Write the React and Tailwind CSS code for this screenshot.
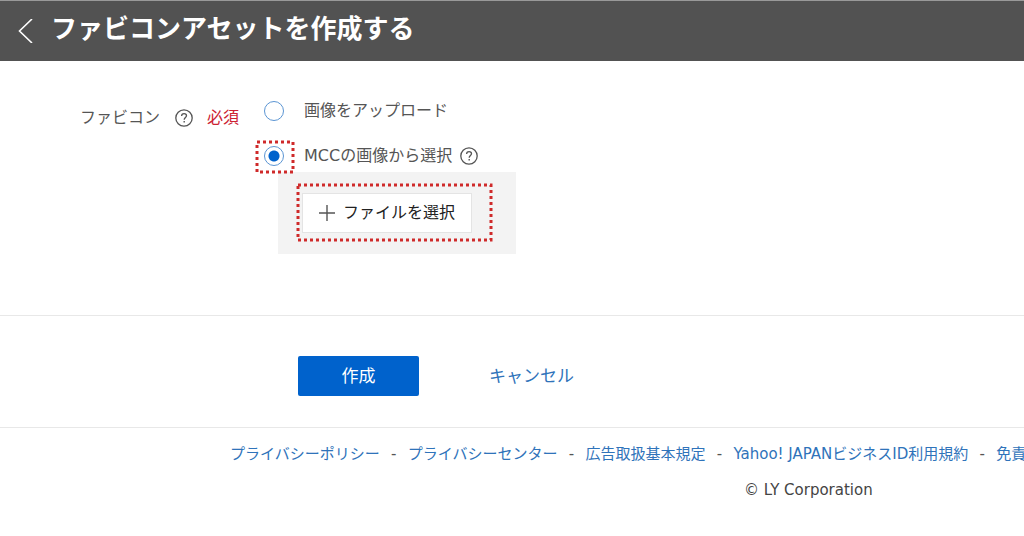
import { useState } from 'react';

const footerLinks = [
  'プライバシーポリシー',
  'プライバシーセンター',
  '広告取扱基本規定',
  'Yahoo! JAPANビジネスID利用規約',
  '免責事項',
];

function HelpIcon() {
  return (
    <svg className="h-[18px] w-[18px] shrink-0 text-[#555]" viewBox="0 0 18 18" fill="none" stroke="currentColor" strokeWidth="1.3" aria-hidden="true">
      <circle cx="9" cy="9" r="8.2" />
      <path d="M6.6 7.1c0-1.5 1-2.5 2.5-2.5s2.4.9 2.4 2.2c0 1.7-2.3 1.9-2.3 4" strokeWidth="1.3" />
      <path d="M9.2 12v1.5" strokeWidth="1.4" />
    </svg>
  );
}

// Red dotted frame laid over the element it points out
function Highlight({ className }) {
  return (
    <svg className={`pointer-events-none absolute overflow-visible ${className}`} aria-hidden="true">
      <rect width="100%" height="100%" fill="none" stroke="#cf2a2a" strokeWidth="3" strokeDasharray="3 3" />
    </svg>
  );
}

function RadioInput({ id, checked, onChange }) {
  return (
    <input
      type="radio"
      id={id}
      name="source"
      checked={checked}
      onChange={onChange}
      className="block h-5 w-5 appearance-none rounded-full border border-[#5b95d3] bg-white checked:bg-[radial-gradient(circle,#0062cc_5px,transparent_6px)]"
    />
  );
}

function App() {
  const [source, setSource] = useState('mcc');

  return (
    <div className="overflow-hidden bg-white font-['DejaVu_Sans','Noto_Sans_CJK_JP',sans-serif] text-[16px] leading-6 text-[#555]">
      <header className="flex h-[61px] items-center border-t border-[#999] bg-[#525252] pb-1 pl-[18px] text-white">
        <button type="button" aria-label="戻る" className="mt-1">
          <svg className="h-6 w-[15px]" viewBox="0 0 15 24" fill="none" stroke="currentColor" strokeWidth="1.6">
            <path d="M14 0 1.5 12 14 24" />
          </svg>
        </button>
        <h1 className="ml-[18px] text-[26px] leading-9 font-bold">ファビコンアセットを作成する</h1>
      </header>

      <main>
        <section className="flex h-[254px] items-start pt-[38px] pl-20">
          <div className="mt-[7px] flex w-[184px] shrink-0 items-center">
            <span>ファビコン</span>
            <span className="ml-[15px]"><HelpIcon /></span>
            <span className="ml-[14px] text-[#cc2233]">必須</span>
          </div>

          <div>
            <div className="flex items-center">
              <RadioInput id="upload" checked={source === 'upload'} onChange={() => setSource('upload')} />
              <label htmlFor="upload" className="ml-5">画像をアップロード</label>
            </div>
            <div className="mt-[21px] flex items-center">
              <div className="relative">
                <RadioInput id="mcc" checked={source === 'mcc'} onChange={() => setSource('mcc')} />
                <Highlight className="-top-1 -left-[7px] h-[30px] w-9" />
              </div>
              <label htmlFor="mcc" className="mr-2 ml-5">MCCの画像から選択</label>
              <HelpIcon />
            </div>
            <div className="mt-1 ml-[14px] w-[238px] bg-[#f3f3f3] py-[21px] pl-6">
              <div className="relative w-max">
                <button type="button" className="flex h-10 w-[170px] items-center border border-[#e4e4e4] bg-white pl-4 text-[#222]">
                  <svg className="mr-2 h-4 w-4" viewBox="0 0 16 16" stroke="#555" strokeWidth="1.4">
                    <path d="M8 0v16M0 8h16" />
                  </svg>
                  ファイルを選択
                </button>
                <Highlight className="-top-2 -left-1 h-[55px] w-[193px]" />
              </div>
            </div>
          </div>
        </section>

        <section className="flex h-[113px] items-center border-y border-[#e8e8e8] pt-2 pl-[298px]">
          <button type="button" className="h-10 w-[121px] rounded-[2px] bg-[#0062cc] text-[17px] text-white">作成</button>
          <button type="button" className="ml-[70px] text-[17px] text-[#2f73ba]">キャンセル</button>
        </section>
      </main>

      <footer className="pt-[14px] text-[15px]">
        <ul className="flex pl-[230px] whitespace-nowrap">
          {footerLinks.map((link, i) => (
            <li key={link} className="flex">
              {i > 0 && <span className="w-7 text-center">-</span>}
              <a href="#" className="text-[#2f73ba]">{link}</a>
            </li>
          ))}
        </ul>
        <p className="mt-3 pl-[744px] text-[#444]">© LY Corporation</p>
      </footer>
    </div>
  );
}

export default App;
